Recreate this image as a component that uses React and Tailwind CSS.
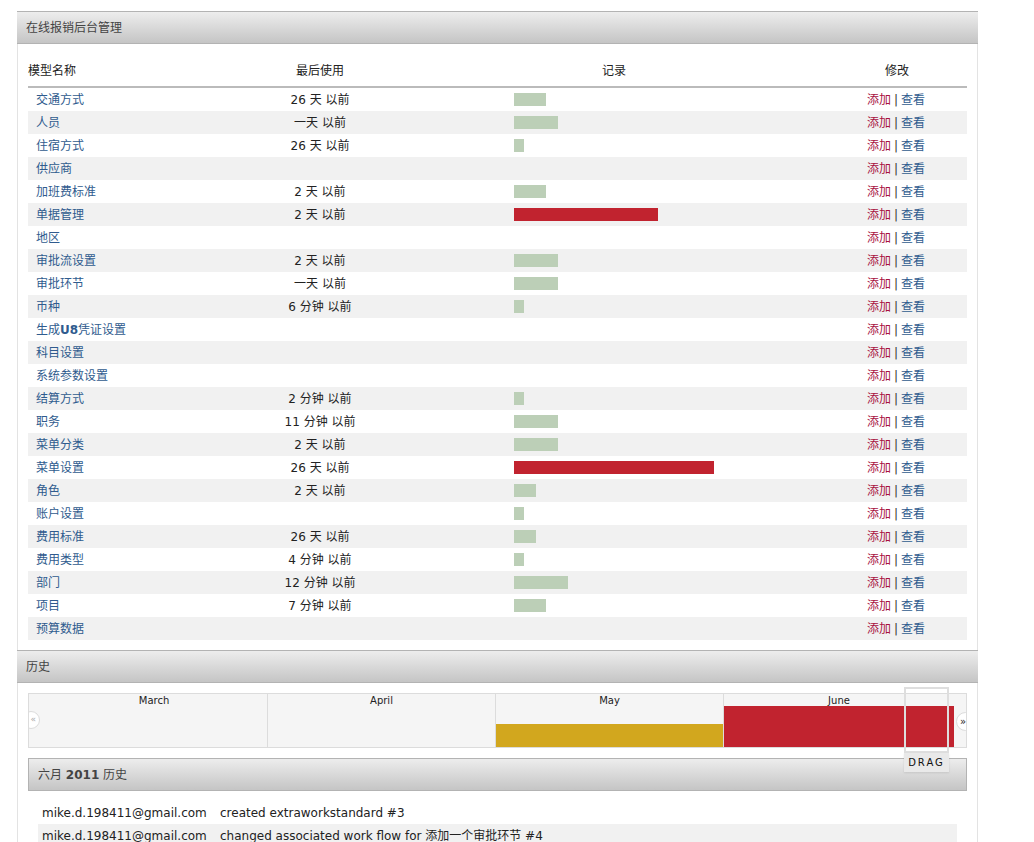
const models = [
  { name: '交通方式', last: '26 天 以前', bar: 32 },
  { name: '人员', last: '一天 以前', bar: 44 },
  { name: '住宿方式', last: '26 天 以前', bar: 10 },
  { name: '供应商', last: '', bar: 0 },
  { name: '加班费标准', last: '2 天 以前', bar: 32 },
  { name: '单据管理', last: '2 天 以前', bar: 144, hot: true },
  { name: '地区', last: '', bar: 0 },
  { name: '审批流设置', last: '2 天 以前', bar: 44 },
  { name: '审批环节', last: '一天 以前', bar: 44 },
  { name: '币种', last: '6 分钟 以前', bar: 10 },
  { name: '生成U8凭证设置', last: '', bar: 0, u8: true },
  { name: '科目设置', last: '', bar: 0 },
  { name: '系统参数设置', last: '', bar: 0 },
  { name: '结算方式', last: '2 分钟 以前', bar: 10 },
  { name: '职务', last: '11 分钟 以前', bar: 44 },
  { name: '菜单分类', last: '2 天 以前', bar: 44 },
  { name: '菜单设置', last: '26 天 以前', bar: 200, hot: true },
  { name: '角色', last: '2 天 以前', bar: 22 },
  { name: '账户设置', last: '', bar: 10 },
  { name: '费用标准', last: '26 天 以前', bar: 22 },
  { name: '费用类型', last: '4 分钟 以前', bar: 10 },
  { name: '部门', last: '12 分钟 以前', bar: 54 },
  { name: '项目', last: '7 分钟 以前', bar: 32 },
  { name: '预算数据', last: '', bar: 0 },
]

const history = [
  { who: 'mike.d.198411@gmail.com', what: 'created extraworkstandard #3' },
  { who: 'mike.d.198411@gmail.com', what: 'changed associated work flow for 添加一个审批环节 #4' },
]

function PanelHeader({ children, className = '' }) {
  return (
    <div className={`h-[33px] flex items-center border-y border-[#b3b3b3] bg-gradient-to-b from-[#ededed] to-[#c5c5c5] text-[12px] text-[#444] ${className}`}>
      {children}
    </div>
  )
}

function NameCell({ m }) {
  if (m.u8) {
    return (
      <span>生成<b className="font-bold">U8</b>凭证设置</span>
    )
  }
  return m.name
}

export default function App() {
  return (
    <div className="relative min-h-screen bg-white pt-[11px] text-[12px] text-[#222]" style={{ fontFamily: '"DejaVu Sans", "Noto Sans CJK SC", sans-serif' }}>
      <div className="ml-[17px] w-[961px] border-x border-[#e3e3e3] min-h-[831px]">
        {/* Admin panel */}
        <PanelHeader className="pl-[9px] -mx-px">在线报销后台管理</PanelHeader>

        <div className="mx-[10px] mt-[11px]">
          <div className="grid grid-cols-[172px_240px_66px_216px_106px_138px] h-[33px] items-center border-b-2 border-[#bbb]">
            <div>模型名称</div>
            <div className="text-center">最后使用</div>
            <div />
            <div className="text-center">记录</div>
            <div />
            <div className="text-center">修改</div>
          </div>

          {models.map((m, i) => (
            <div
              key={m.name}
              className={`grid grid-cols-[172px_240px_66px_216px_106px_138px] h-[23px] items-center ${i % 2 ? 'bg-[#f1f1f1]' : 'bg-white'}`}
            >
              <div className="pl-[8px] text-[#2f5b8e]"><NameCell m={m} /></div>
              <div className="text-center">{m.last}</div>
              <div />
              <div className="pl-[8px]">
                {m.bar > 0 && (
                  <div
                    className={`h-[13px] ${m.hot ? 'bg-[#c1232f]' : 'bg-[#bccfb7]'}`}
                    style={{ width: m.bar }}
                  />
                )}
              </div>
              <div />
              <div className="pl-[39px] whitespace-nowrap">
                <span className="text-[#a8113f]">添加</span>
                <span className="mx-[3px] text-[#333]">|</span>
                <span className="text-[#2f5b8e]">查看</span>
              </div>
            </div>
          ))}
        </div>

        {/* History panel */}
        <PanelHeader className="pl-[9px] mt-[10px] -mx-px">历史</PanelHeader>

        <div className="mx-[10px] mt-[10px]">
          <div className="relative h-[55px] border border-[#dcdcdc] bg-[#f5f5f5] overflow-hidden">
            <div className="flex h-full">
              {[
                { label: 'March', w: 'w-[239px]', pl: 'pl-[12px]' },
                { label: 'April', w: 'w-[228px]', pl: '' },
                { label: 'May', w: 'w-[228px]', pl: '' },
                { label: 'June', w: 'w-[230px]', pl: '' },
              ].map((mo, i) => (
                <div key={mo.label} className={`relative h-full ${mo.w} ${i < 3 ? 'border-r border-[#dcdcdc]' : ''}`}>
                  {mo.label === 'May' && <div className="absolute left-0 right-0 bottom-0 h-[23px] bg-[#d2a71e]" />}
                  {mo.label === 'June' && <div className="absolute left-0 right-0 bottom-0 h-[41px] bg-[#c1232f]" />}
                  <div className={`relative text-center text-[10px] leading-[12px] pt-[1px] text-[#222] ${mo.pl}`}>{mo.label}</div>
                </div>
              ))}
            </div>
            <div className="absolute left-[-7px] top-[17px] w-[18px] h-[18px] rounded-full bg-white border border-[#dcdcdc] flex items-center justify-end pr-[3px] text-[9px] text-[#aaa]">«</div>
            <div className="absolute right-[-9px] top-[18px] w-[19px] h-[19px] rounded-full bg-white border border-[#dcdcdc] flex items-center pl-[3px] text-[10px] text-[#222]">»</div>
          </div>

          <PanelHeader className="pl-[9px] mt-[10px] border-x">
            <span className="text-[#444]">六月 <b className="font-bold">2011</b> 历史</span>
          </PanelHeader>

          <div className="mt-[10px] mx-[10px]">
            {history.map((h, i) => (
              <div key={i} className={`flex h-[23px] items-center pl-[4px] text-[12px] text-[#222] ${i % 2 ? 'bg-[#f1f1f1]' : ''}`}>
                <span className="w-[178px]">{h.who}</span>
                <span>{h.what}</span>
              </div>
            ))}
          </div>
        </div>
      </div>

      {/* Drag handle over the timeline */}
      <div className="absolute left-[904px] top-[687px] w-[45px]">
        <div className="h-[66px] border-2 border-[#dedede]" />
        <div className="h-[19px] bg-[#e9e9e9] shadow-[0_1px_2px_rgba(0,0,0,0.1)] text-center text-[10px] leading-[19px] tracking-[2px] text-[#111]">DRAG</div>
      </div>
    </div>
  )
}
